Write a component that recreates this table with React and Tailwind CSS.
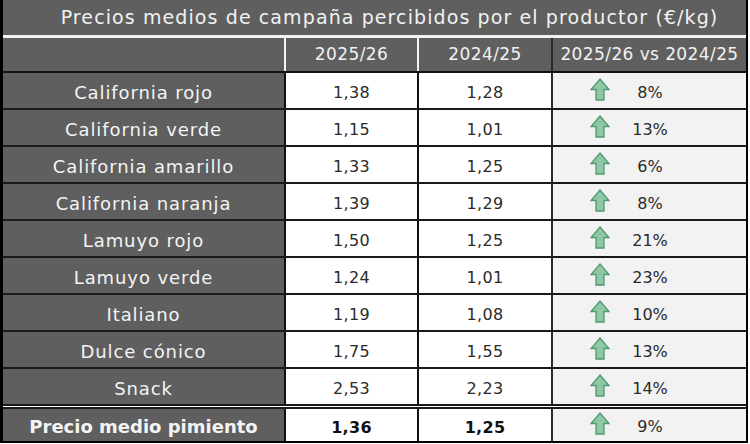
import React from "react";

const rows = [
  ["California rojo", "1,38", "1,28", "8%"],
  ["California verde", "1,15", "1,01", "13%"],
  ["California amarillo", "1,33", "1,25", "6%"],
  ["California naranja", "1,39", "1,29", "8%"],
  ["Lamuyo rojo", "1,50", "1,25", "21%"],
  ["Lamuyo verde", "1,24", "1,01", "23%"],
  ["Italiano", "1,19", "1,08", "10%"],
  ["Dulce cónico", "1,75", "1,55", "13%"],
  ["Snack", "2,53", "2,23", "14%"],
];

function Arrow() {
  return (
    <svg width="20" height="23" viewBox="0 0 20 23" className="shrink-0">
      <path
        d="M10 1 L19 11.5 L14 11.5 L14 22 L6 22 L6 11.5 L1 11.5 Z"
        fill="#8fc7a6"
        stroke="#4f9a70"
        strokeWidth="1.3"
        strokeLinejoin="miter"
      />
    </svg>
  );
}

function Row({ label, a, b, pct, last, bold }) {
  const h = bold
    ? "h-[37px] border-t-[5px] border-double border-[#1a1a1a]"
    : last
    ? "h-[35px]"
    : "h-[37px] border-b-2 border-[#1a1a1a]";
  const w = bold ? "font-bold text-[#111]" : "text-[#2a2a2a]";
  return (
    <div className={`grid grid-cols-[281px_133px_134px_195px] ${h}`}>
      <div
        className={`bg-[#5f5f5f] flex items-center justify-center pt-[3px] text-[#f4f4f4] text-[18px] ${
          bold ? "font-bold" : "tracking-[0.9px]"
        }`}
      >
        {label}
      </div>
      <div className={`bg-white border-l-2 border-[#111] flex items-center justify-center pt-[5px] text-[16px] tracking-[0.3px] ${w}`}>
        {a}
      </div>
      <div className={`bg-white border-l-2 border-[#111] flex items-center justify-center pt-[5px] text-[16px] tracking-[0.3px] ${w}`}>
        {b}
      </div>
      <div className="bg-[#f2f2f2] border-l-2 border-[#2a2a2a] flex items-center pl-[37px] text-[16px] text-[#2a2a2a]">
        <div className="-mt-[3px]">
          <Arrow />
        </div>
        <span className="w-[80px] text-center pt-[4px]">{pct}</span>
      </div>
    </div>
  );
}

export default function App() {
  return (
    <div
      className="w-[750px] h-[444px] overflow-hidden bg-white"
      style={{ fontFamily: '"DejaVu Sans", sans-serif' }}
    >
      <div className="w-[748px] border-l-[3px] border-r-2 border-black">
        <div className="h-[38px] bg-[#5f5f5f] border-b-[3px] border-[#f4f4f4] flex items-center justify-center pl-[30px] text-[19px] tracking-[1.1px] text-[#f2f2f2]">
          Precios medios de campaña percibidos por el productor (€/kg)
        </div>
        <div className="grid grid-cols-[281px_133px_134px_195px] h-[35px] border-b-2 border-[#111] bg-[#5f5f5f] text-[#f2f2f2] text-[17px] tracking-[0.4px]">
          <div />
          <div className="border-l-2 border-[#f4f4f4] flex items-center justify-center">2025/26</div>
          <div className="border-l-2 border-[#f4f4f4] flex items-center justify-center">2024/25</div>
          <div className="border-l-2 border-[#2a2a2a] flex items-center justify-center">2025/26 vs 2024/25</div>
        </div>
        {rows.map((r, i) => (
          <Row
            key={r[0]}
            label={r[0]}
            a={r[1]}
            b={r[2]}
            pct={r[3]}
            last={i === rows.length - 1}
          />
        ))}
        <div className="border-b-2 border-black">
          <Row label="Precio medio pimiento" a="1,36" b="1,25" pct="9%" bold />
        </div>
      </div>
    </div>
  );
}
